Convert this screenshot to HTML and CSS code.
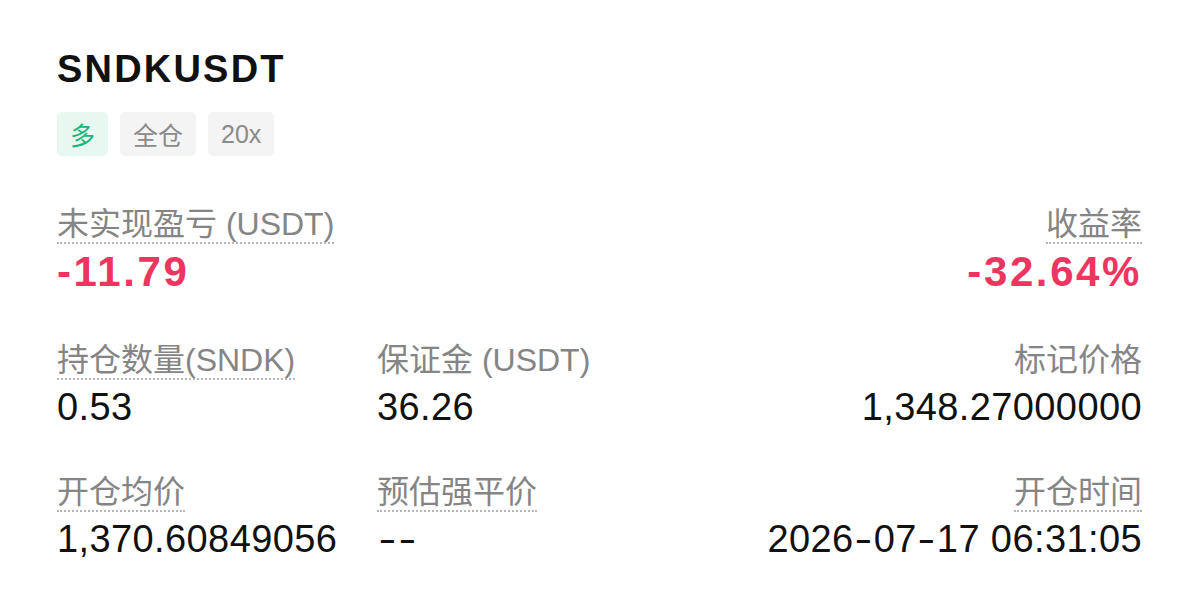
FILE: index.html
```html
<!DOCTYPE html>
<html lang="zh-CN">
<head>
    <meta charset="UTF-8">
    <meta name="viewport" content="width=device-width, initial-scale=1.0">
    <title>SNDKUSDT 持仓</title>
    <link rel="stylesheet" href="styles.css">
</head>
<body>

    <div class="position-card">
        <h1 class="symbol">SNDKUSDT</h1>

        <div class="tags">
            <span class="tag tag-long">多</span>
            <span class="tag">全仓</span>
            <span class="tag tag-num">20x</span>
        </div>

        <div class="row row-pnl">
            <div class="cell">
                <span class="label">未实现盈亏 (USDT)</span>
                <div class="value value-red">-11.79</div>
            </div>
            <div class="cell cell-right">
                <span class="label">收益率</span>
                <div class="value value-red">-32.64%</div>
            </div>
        </div>

        <div class="row">
            <div class="cell cell-first">
                <span class="label">持仓数量(SNDK)</span>
                <div class="value">0.53</div>
            </div>
            <div class="cell cell-mid">
                <span class="label label-plain">保证金 (USDT)</span>
                <div class="value">36.26</div>
            </div>
            <div class="cell cell-right">
                <span class="label label-plain">标记价格</span>
                <div class="value">1,348.27000000</div>
            </div>
        </div>

        <div class="row row-last">
            <div class="cell cell-first">
                <span class="label">开仓均价</span>
                <div class="value">1,370.60849056</div>
            </div>
            <div class="cell cell-mid">
                <span class="label">预估强平价</span>
                <div class="value"><span class="dash">-</span><span class="dash">-</span></div>
            </div>
            <div class="cell cell-right">
                <span class="label">开仓时间</span>
                <div class="value">2026<span class="dash">-</span>07<span class="dash">-</span>17 06:31:05</div>
            </div>
        </div>
    </div>

</body>
</html>
```

FILE: styles.css
```css
body {
    margin: 0;
    background-color: #ffffff;
    font-family: "Liberation Sans", "Noto Sans CJK SC", Arial, sans-serif;
    color: #111;
}

.position-card {
    padding: 46px 57px 0 57px;
    width: 1085px;
}

.symbol {
    margin: 0;
    font-size: 38px;
    line-height: 46px;
    font-weight: 700;
    letter-spacing: 2.2px;
    color: #111;
}

.tags {
    display: flex;
    gap: 12px;
    margin-top: 20px;
}

.tag {
    display: inline-flex;
    align-items: center;
    justify-content: center;
    height: 44px;
    padding: 0 13px;
    border-radius: 5px;
    background-color: #f4f4f4;
    color: #8a8a8a;
    font-family: "Noto Sans CJK SC", sans-serif;
    font-size: 25px;
}

.tag-long {
    background-color: #e7f8f0;
    color: #1bb57d;
}

.tag-num {
    font-family: "Liberation Sans", sans-serif;
    font-size: 25px;
}

.row {
    display: flex;
    align-items: flex-start;
    margin-top: 45px;
}

.row-pnl {
    margin-top: 51px;
}

.row-last {
    margin-top: 44px;
}

.cell {
    display: flex;
    flex-direction: column;
    align-items: flex-start;
}

.cell-first {
    width: 320px;
}

.cell-mid {
    flex: 1;
}

.cell-right {
    margin-left: auto;
    align-items: flex-end;
}

.label {
    font-size: 32px;
    line-height: 35px;
    color: #858585;
    border-bottom: 2px dotted #b5b5b5;
}

.label-plain {
    border-bottom-color: transparent;
}

.value {
    margin-top: 3px;
    font-size: 38px;
    line-height: 48px;
    letter-spacing: 0.4px;
    color: #111;
}

.value .dash {
    display: inline-block;
    margin: 0 3.5px;
    transform: scaleX(1.4);
}

.value-red {
    margin-top: 2px;
    font-size: 42px;
    line-height: 52px;
    font-weight: 700;
    letter-spacing: 2.6px;
    color: #ee3560;
}
```
